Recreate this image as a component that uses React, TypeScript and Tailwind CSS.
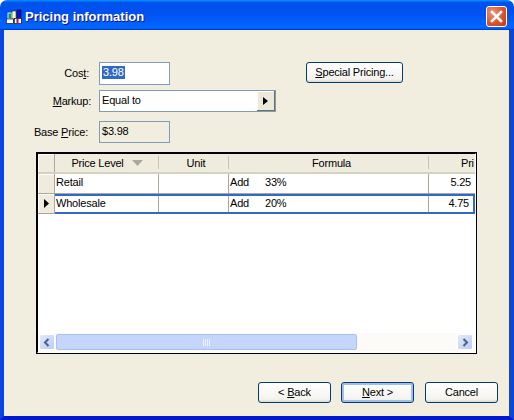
import type { ReactNode } from "react";

const field = "border border-[#7f9db9] flex items-center px-[2px]";
const cell = "flex items-center border-r border-[#aca899] pl-[1px] pb-[2px]";

const XpButton = ({ children, main, w = "w-[73px]" }: { children: ReactNode; main?: boolean; w?: string }) => (
  <button
    className={`${w} h-[21px] rounded-[3px] border border-[#003c74] flex items-center justify-center text-[11px] text-black bg-[linear-gradient(180deg,#ffffff,#f4f3ee_85%,#dcd8ce)] ${
      main ? "shadow-[inset_0_0_0_2px_#a5bde9]" : ""
    }`}
  >
    {children}
  </button>
);

const HeaderCell = ({ w, children, pad = "" }: { w: string; children: ReactNode; pad?: string }) => (
  <div className={`${w} ${pad} h-full flex items-center justify-center relative text-[11px]`}>
    {children}
    <span className="absolute right-0 top-[2px] bottom-[3px] w-px bg-[#c7c5b2]" />
  </div>
);

const Row = ({ name, formula, pct, price, active }: { name: string; formula: string; pct: string; price: string; active?: boolean }) => (
  <div className="flex h-[20px]">
    <div className="w-[17px] flex items-center justify-center bg-[#efecdd] border-r border-b border-[#aca899] shadow-[inset_1px_1px_0_#ffffff]">
      {active && (
        <svg width="6" height="9" viewBox="0 0 6 9">
          <path d="M1 0L6 4.5L1 9Z" fill="#000" />
        </svg>
      )}
    </div>
    <div className={`flex flex-1 text-[11px] ${active ? "border-y-2 border-r-2 border-[#316ac5]" : "border-b border-[#aca899]"}`}>
      <div className={`${cell} w-[104px]`}>{name}</div>
      <div className={`${cell} w-[70px]`} />
      <div className={`${cell} w-[200px] gap-[16px]`}>
        <span>{formula}</span>
        <span>{pct}</span>
      </div>
      <div className="flex flex-1 items-center justify-end pr-[4px] pb-[2px]">{price}</div>
    </div>
  </div>
);

const ScrollBtn = ({ d }: { d: string }) => (
  <div className="w-[16px] h-[16px] rounded-[2px] border border-white bg-[linear-gradient(135deg,#e1eafe,#b9cdf7)] flex items-center justify-center">
    <svg width="8" height="9" viewBox="0 0 8 9">
      <path d={d} fill="none" stroke="#4d6185" strokeWidth="2" />
    </svg>
  </div>
);

export default function App() {
  return (
    <div className="w-[514px] h-[420px] bg-white font-['Liberation_Sans',Arial,sans-serif] text-black flex flex-col rounded-t-[7px] overflow-hidden">
      <div className="h-[30px] shrink-0 flex items-center pt-[3px] pl-[6px] pr-[7px] bg-[linear-gradient(180deg,#0997ff,#0053ee_8%,#0050ee_40%,#0066ff_88%,#0066ff_93%,#005bff_95%,#003dd7_96%,#003dd7)]">
        <svg width="16" height="15" viewBox="0 0 16 15" className="shrink-0">
          <rect x="2" y="4" width="3.5" height="6" fill="#0a9a4a" stroke="#fff" strokeWidth="0.8" />
          <rect x="6" y="2" width="4" height="8" fill="#fff8c8" stroke="#0a2a60" strokeWidth="0.6" />
          <rect x="11" y="1" width="4" height="9" fill="#1010c8" stroke="#000" strokeWidth="0.5" />
          <rect x="0.3" y="10" width="7" height="4.5" fill="#fff" stroke="#000" strokeWidth="0.6" />
          <rect x="8.3" y="9.5" width="7" height="5" fill="#fff" stroke="#000" strokeWidth="0.6" />
          <rect x="10.5" y="10" width="2" height="4.5" fill="#b01060" />
        </svg>
        <span className="ml-[3px] text-white font-bold text-[13px] [text-shadow:1px_1px_0_#0f1089]">Pricing information</span>
        <div className="ml-auto w-[21px] h-[21px] rounded-[3px] border border-white bg-[radial-gradient(circle_at_30%_30%,#ec9478,#d9502a_60%,#c03a18)] flex items-center justify-center">
          <svg width="13" height="13" viewBox="0 0 13 13">
            <path d="M2 2L11 11M11 2L2 11" stroke="#fff" strokeWidth="2.6" strokeLinecap="square" />
          </svg>
        </div>
      </div>

      <div className="flex-1 min-h-0 flex flex-col border-l-[4px] border-r-[5px] border-b-[4px] border-l-[#0a45dc] border-r-[#0a45dc] border-b-[#0019cf] bg-[#f1eedf] text-[11px] tracking-[-0.2px] pt-[32px]">
        <div className="flex h-[23px] items-center">
          <div className="w-[85px] text-right">
            Cos<u>t</u>:
          </div>
          <div className={`${field} ml-[10px] w-[71px] h-full bg-white pb-[3px]`}>
            <span className="bg-[#316ac5] text-white leading-[13px] px-px">3.98</span>
          </div>
          <div className="ml-[136px] self-start">
            <XpButton w="w-[97px]">
              <span>
                <u>S</u>pecial Pricing...
              </span>
            </XpButton>
          </div>
        </div>

        <div className="flex h-[22px] items-center mt-[5px]">
          <div className="w-[87px] text-right">
            <u>M</u>arkup:
          </div>
          <div className={`${field} ml-[8px] w-[177px] h-full bg-white justify-between pr-0`}>
            <span className="pb-[2px]">Equal to</span>
            <div className="w-[18px] h-[20px] bg-[#ece9d8] border-r border-b border-[#716f64] shadow-[inset_1px_1px_0_#ffffff] flex items-center justify-center">
              <svg width="5" height="8" viewBox="0 0 5 8">
                <path d="M0 0L5 4L0 8Z" fill="#000" />
              </svg>
            </div>
          </div>
        </div>

        <div className="flex h-[22px] items-center mt-[9px]">
          <div className="w-[84px] text-right">
            Base <u>P</u>rice:
          </div>
          <div className={`${field} ml-[11px] w-[71px] h-full pb-[2px]`}>$3.98</div>
        </div>

        <div className="ml-[32px] mt-[9px] w-[441px] h-[202px] border-2 border-t-black border-l-black border-r-white border-b-white outline outline-1 -outline-offset-1 outline-black bg-white flex flex-col shrink-0">
          <div className="flex h-[20px] bg-[#efecdd] border-b-2 border-[#d6d2c2] shrink-0">
            <div className="w-[17px] border-r border-[#aca899] shadow-[inset_1px_1px_0_#ffffff]" />
            <HeaderCell w="w-[104px]">
              <span className="mr-[4px]">Price Level</span>
              <svg width="11" height="6" viewBox="0 0 11 6" className="ml-[4px]">
                <path d="M0 0H11L5.5 6Z" fill="#aca899" />
              </svg>
            </HeaderCell>
            <HeaderCell w="w-[70px]" pad="pl-[4px]">Unit</HeaderCell>
            <HeaderCell w="w-[200px]" pad="pl-[5px]">Formula</HeaderCell>
            <div className="flex-1 overflow-hidden pl-[32px] flex items-center">Pri</div>
          </div>
          <Row name="Retail" formula="Add" pct="33%" price="5.25" />
          <Row name="Wholesale" formula="Add" pct="20%" price="4.75" active />
          <div className="flex-1" />
          <div className="h-[18px] shrink-0 flex items-center pl-[1px] pr-[2px] bg-[#fcfbf8] mb-[1px]">
            <ScrollBtn d="M5.5 1L2 4.5L5.5 8" />
            <div className="ml-[1px] w-[301px] h-[16px] rounded-[2px] border border-[#a9c0f0] bg-[#c4d6fb] flex items-center justify-center">
              <svg width="8" height="7" viewBox="0 0 8 7">
                <path d="M0.5 0V7M2.5 0V7M4.5 0V7M6.5 0V7" stroke="#eef3fe" strokeWidth="1" />
              </svg>
            </div>
            <div className="flex-1" />
            <ScrollBtn d="M2.5 1L6 4.5L2.5 8" />
          </div>
        </div>

        <div className="flex justify-end mt-[28px] pr-[11px]">
          <XpButton>
            <span>
              &lt; <u>B</u>ack
            </span>
          </XpButton>
          <div className="ml-[10px]">
            <XpButton main>
              <span>
                <u>N</u>ext &gt;
              </span>
            </XpButton>
          </div>
          <div className="ml-[11px]">
            <XpButton>Cancel</XpButton>
          </div>
        </div>
      </div>
    </div>
  );
}
